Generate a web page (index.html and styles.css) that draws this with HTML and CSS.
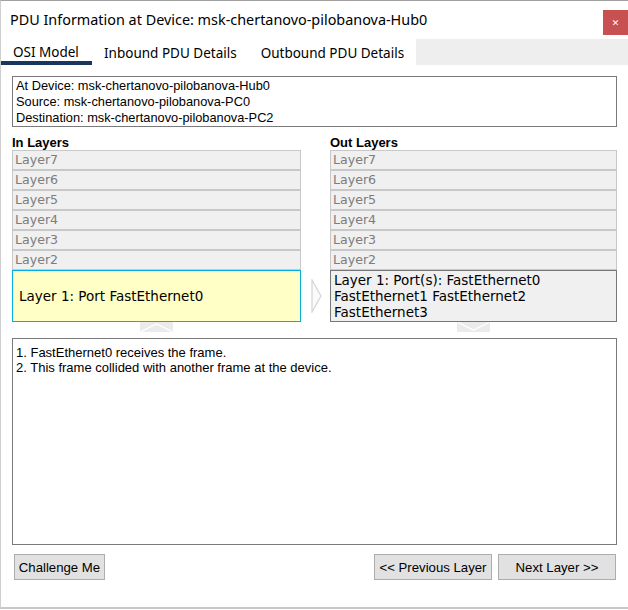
FILE: index.html
```html
<!DOCTYPE html>
<html>
<head>
<meta charset="utf-8">
<link rel="stylesheet" href="styles.css">
</head>
<body>
<div class="window">
  <div class="titlebar">
    <div class="title">PDU Information at Device: msk-chertanovo-pilobanova-Hub0</div>
    <div class="close">&#x2715;</div>
  </div>
  <div class="tabs">
    <div class="tab active">OSI Model</div>
    <div class="tab">Inbound PDU Details</div>
    <div class="tab">Outbound PDU Details</div>
    <div class="tab-fill"></div>
  </div>
  <div class="content">
    <div class="info">
      <div>At Device: msk-chertanovo-pilobanova-Hub0</div>
      <div>Source: msk-chertanovo-pilobanova-PC0</div>
      <div>Destination: msk-chertanovo-pilobanova-PC2</div>
    </div>
    <div class="layers">
      <div class="col">
        <div class="col-head">In Layers</div>
        <div class="row">Layer7</div>
        <div class="row">Layer6</div>
        <div class="row">Layer5</div>
        <div class="row">Layer4</div>
        <div class="row">Layer3</div>
        <div class="row">Layer2</div>
        <div class="l1 l1-in">Layer 1: Port FastEthernet0</div>
        <div class="nav-arrow">
          <svg width="33" height="10" viewBox="0 0 33 10"><rect width="33" height="10" fill="#ebebeb"/><polyline points="1,9.5 16.5,2 32,9.5" fill="none" stroke="#ffffff" stroke-width="1.3"/></svg>
        </div>
      </div>
      <div class="mid">
        <div class="mid-arrow">
          <svg width="11" height="34" viewBox="0 0 11 34"><polygon points="1,1 10,17 1,33" fill="#fafafa" stroke="#d4d4d4" stroke-width="1.2"/></svg>
        </div>
      </div>
      <div class="col">
        <div class="col-head">Out Layers</div>
        <div class="row">Layer7</div>
        <div class="row">Layer6</div>
        <div class="row">Layer5</div>
        <div class="row">Layer4</div>
        <div class="row">Layer3</div>
        <div class="row">Layer2</div>
        <div class="l1 l1-out">Layer 1: Port(s): FastEthernet0<br>FastEthernet1 FastEthernet2<br>FastEthernet3</div>
        <div class="nav-arrow">
          <svg width="33" height="10" viewBox="0 0 33 10"><rect width="33" height="10" fill="#ebebeb"/><polyline points="1,0.5 16.5,8 32,0.5" fill="none" stroke="#ffffff" stroke-width="1.3"/></svg>
        </div>
      </div>
    </div>
    <div class="desc">
      <div>1. FastEthernet0 receives the frame.</div>
      <div>2. This frame collided with another frame at the device.</div>
    </div>
    <div class="buttons">
      <button class="btn btn-challenge">Challenge Me</button>
      <div class="spacer"></div>
      <button class="btn btn-nav">&lt;&lt; Previous Layer</button>
      <button class="btn btn-nav">Next Layer &gt;&gt;</button>
    </div>
  </div>
</div>
</body>
</html>
```

FILE: styles.css
```css
html, body {
  margin: 0;
  padding: 0;
  background: #ffffff;
}
.window {
  width: 628px;
  height: 609px;
  box-sizing: border-box;
  border-top: 1px solid #a0a0a0;
  border-left: 1px solid #cfcfcf;
  border-bottom: 2px solid #c8c8c8;
  background: #ffffff;
  display: flex;
  flex-direction: column;
}
.titlebar {
  height: 38px;
  display: flex;
  align-items: flex-start;
}
.title {
  flex: 1;
  padding-left: 9px;
  padding-top: 9px;
  font-family: "Noto Sans", sans-serif;
  font-size: 14.4px;
  line-height: 20px;
  color: #000;
}
.close {
  width: 25px;
  height: 25px;
  margin-top: 9px;
  background: #c75050;
  color: #fff;
  font-family: "DejaVu Sans", sans-serif;
  font-size: 9px;
  font-weight: bold;
  display: flex;
  align-items: center;
  justify-content: center;
}
.tabs {
  height: 26px;
  display: flex;
  font-family: "Noto Sans", sans-serif;
  font-size: 13.5px;
}
.tab {
  padding: 2px 12px 0;
  line-height: 24px;
  color: #000;
  background: #fff;
  box-sizing: border-box;
  height: 26px;
}
.tab.active {
  width: 91px;
  border-bottom: 4px solid #17375e;
  line-height: 22px;
  padding-left: 12px;
}
.tab-fill {
  flex: 1;
  background: #eeeeee;
}
.content {
  padding: 11px 11px 0 11px;
  display: flex;
  flex-direction: column;
}
.info {
  height: 51px;
  box-sizing: border-box;
  border: 1px solid #7a7a7a;
  padding: 1px 3px;
  font-family: "Liberation Sans", Arial, sans-serif;
  font-size: 12.8px;
  line-height: 16px;
  color: #000;
}
.layers {
  display: grid;
  grid-template-columns: 289px 29px 287px;
  margin-top: 8px;
}
.col {
  display: flex;
  flex-direction: column;
}
.col-head {
  font-family: "Liberation Sans", Arial, sans-serif;
  font-weight: bold;
  font-size: 13px;
  line-height: 15px;
  color: #000;
}
.row {
  height: 20px;
  box-sizing: border-box;
  border: 1px solid #c8c8c8;
  background: #f0f0f0;
  padding-left: 2px;
  font-family: "DejaVu Sans", Verdana, sans-serif;
  font-size: 12.6px;
  line-height: 18px;
  color: #7d7d7d;
}
.l1 {
  height: 52px;
  box-sizing: border-box;
  font-family: "DejaVu Sans", Verdana, sans-serif;
  font-size: 13.5px;
  color: #000;
}
.l1-in {
  background: #ffffc6;
  border: 1px solid #00b0e0;
  padding-left: 6px;
  display: flex;
  align-items: center;
}
.l1-out {
  background: #f0f0f0;
  border: 1px solid #777777;
  padding: 1px 3px 0;
  line-height: 16px;
}
.nav-arrow {
  height: 10px;
  display: flex;
  justify-content: center;
}
.nav-arrow svg {
  display: block;
}
.mid {
  display: flex;
  flex-direction: column;
  justify-content: flex-end;
  padding-bottom: 10px;
}
.mid-arrow {
  height: 52px;
  display: flex;
  align-items: center;
  justify-content: center;
  padding-left: 1px;
}
.mid-arrow svg {
  display: block;
}
.desc {
  margin-top: 6px;
  height: 207px;
  box-sizing: border-box;
  border: 1px solid #7a7a7a;
  padding: 6px 3px;
  font-family: "Liberation Sans", Arial, sans-serif;
  font-size: 13px;
  line-height: 15px;
  color: #000;
}
.buttons {
  display: flex;
  margin-top: 9px;
  padding-left: 2px;
  padding-right: 1px;
  gap: 6px;
}
.spacer {
  flex: 1;
}
.btn {
  height: 26px;
  box-sizing: border-box;
  border: 1px solid #adadad;
  background: #e1e1e1;
  font-family: "Liberation Sans", Arial, sans-serif;
  font-size: 13.2px;
  color: #000;
  padding: 0;
  margin: 0;
}
.btn-challenge {
  width: 91px;
}
.btn-nav {
  width: 118px;
}
```
